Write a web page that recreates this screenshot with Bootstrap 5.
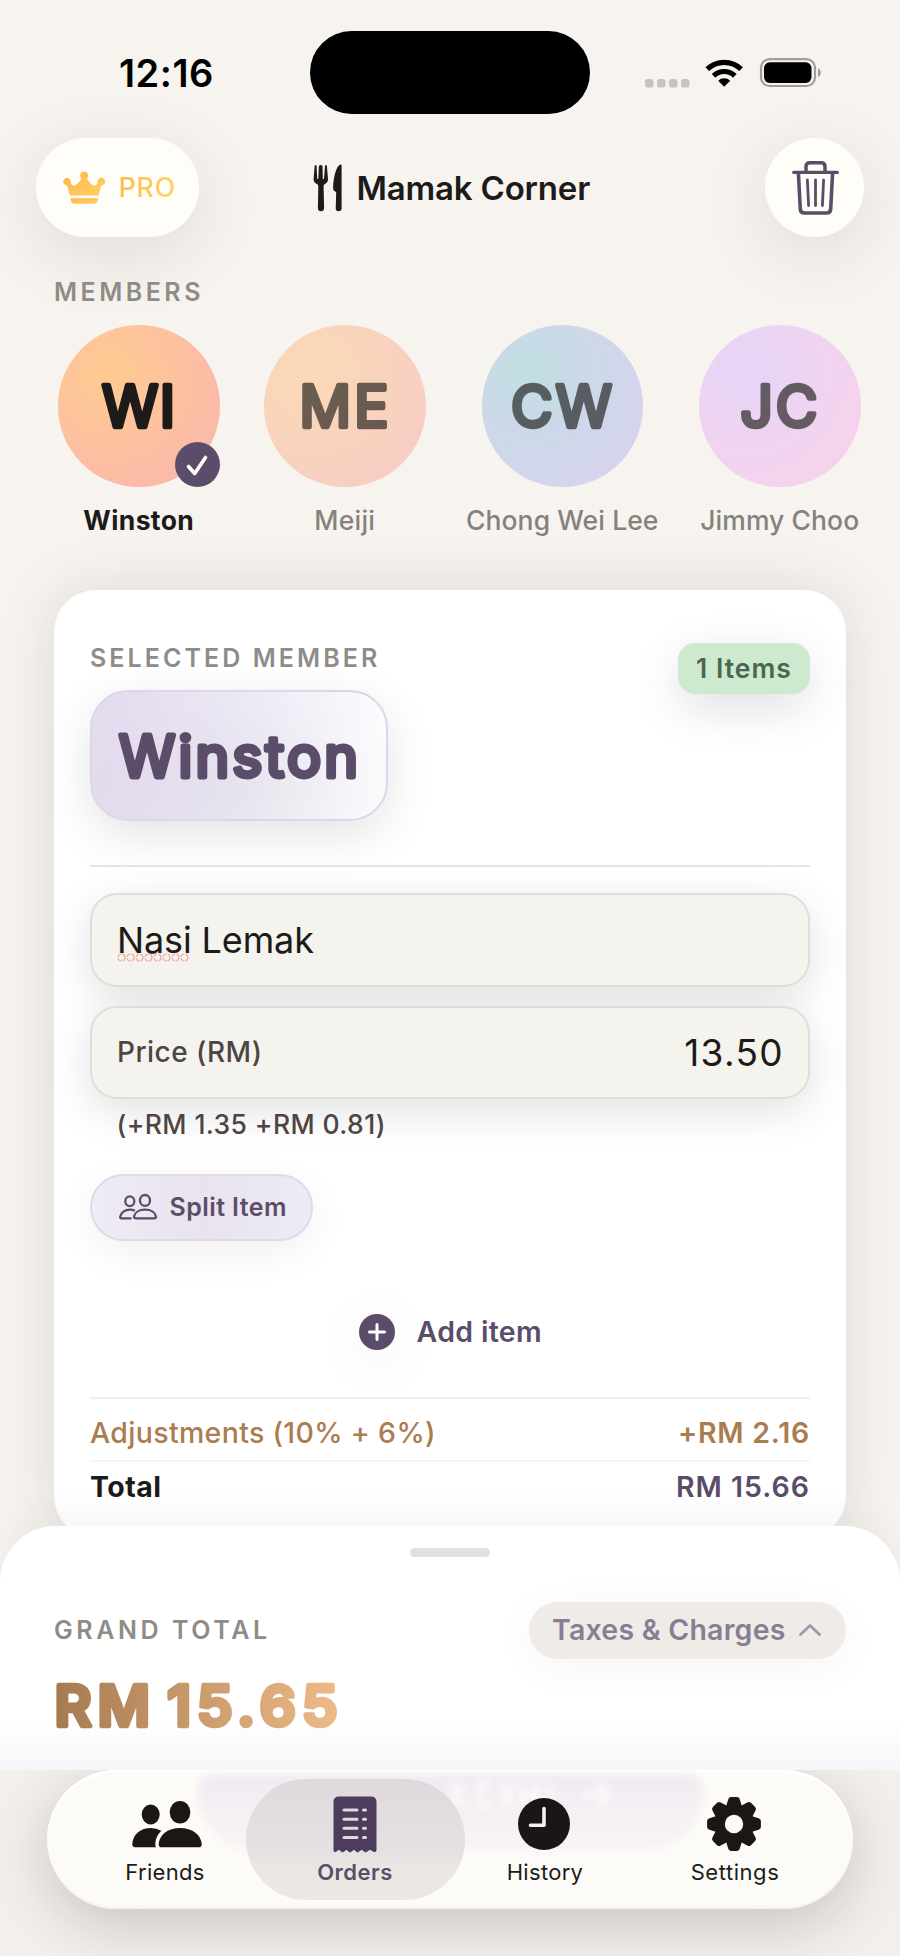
<!DOCTYPE html>
<html lang="en">
<head>
<meta charset="utf-8">
<meta name="viewport" content="width=device-width, initial-scale=1">
<title>Mamak Corner</title>
<link href="https://cdn.jsdelivr.net/npm/bootstrap@5.3.0/dist/css/bootstrap.min.css" rel="stylesheet">
<style>
  :root { --ink:#1c1b19; --plum:#5b4d69; --bronze:#aa7c4f; --muted:#8f8b86; --paper:#f7f4ef; }
  html, body { width:900px; height:1956px; overflow:hidden; }
  body { font-family:Inter,"Liberation Sans",sans-serif; background:var(--paper); color:var(--ink); font-weight:500; }
  svg { display:block; flex:none; overflow:visible; }
  .tx { line-height:30px; white-space:nowrap; }

  .statusbar { height:138px; padding-top:31px; }
  .clock { font-size:38px; font-weight:600; letter-spacing:.52px; line-height:84px; color:#000; margin-left:119px; width:191px; }
  .island { width:280px; height:83px; border-radius:42px; background:#000; }
  .signals { margin-left:55px; height:84px; }

  .topbar { height:99px; padding:0 36px; }
  .float-btn { height:99px; border-radius:50px; background:#fffdf8; box-shadow:0 16px 70px rgba(40,35,50,.11); }
  .pro-btn { width:163px; padding-left:26.5px; gap:13px; }
  .pro-label { font-size:27px; letter-spacing:.55px; background:linear-gradient(100deg,#ffb950,#ffd466); -webkit-background-clip:text; color:transparent; }
  .bin-btn { width:99px; padding-left:1px; }
  .place { font-size:33px; font-weight:600; letter-spacing:-.18px; gap:13.5px; margin-left:114px; }

  .eyebrow { font-size:25px; font-weight:600; color:var(--muted); }
  .members { height:265px; margin-top:18px; }
  .member { width:161.5px; font-size:26.5px; }
  .member .tx { margin-top:17px; line-height:32px; color:#85827d; }
  .face { width:161.5px; height:161.5px; border-radius:50%; }
  .face text { font-size:57px; font-weight:400; fill:#1c1b19; stroke:#1c1b19; stroke-width:4.5px; stroke-linejoin:round; text-anchor:middle; }
  .dim .face svg { opacity:.65; }
  .warm { background:radial-gradient(circle at 30% 30%,#ffcb92,#fdc19f 45%,#fbb8ab 80%); }
  .dim .warm { background:radial-gradient(circle at 30% 30%,#fbd9b6,#f9d3bd 45%,#f8cdc4 80%); }
  .cool { background:radial-gradient(circle at 30% 30%,#bfe0e2,#cad9e7 30%,#d6d4ed 80%); }
  .lilac { background:radial-gradient(circle at 30% 30%,#e6d4f8,#eed4f1 40%,#f6d2ec 80%); }
  .tick { right:0; bottom:0; }

  .order { margin:0 54px; height:948px; padding:53px 36px 0; border-radius:42px; background:#fff; box-shadow:0 0 60px rgba(50,40,40,.13); }
  .picked { width:298px; height:131px; margin-top:17px; border-radius:38px; border:2px solid #dfd5ea; background:radial-gradient(ellipse 62% 80% at 50% 78%,rgba(120,120,120,.07),transparent),linear-gradient(100deg,#e5dcef 8%,#ebe6f4 40%,#fbfafd 92%); box-shadow:0 14px 48px rgba(0,0,0,.11); padding-left:26px; }
  .count { width:132px; height:51px; border-radius:17px; background:#cdeace; color:#4b6550; font-size:26.5px; font-weight:600; letter-spacing:1px; line-height:50px; box-shadow:0 14px 48px rgba(0,0,0,.13); }
  .rule { height:2px; background:#e6e6e6; }
  .field { height:93.5px; border-radius:27px; border:2px solid #e2ddd8; background:#f5f3ee; padding:0 25px; box-shadow:0 12px 44px rgba(0,0,0,.12); }
  .field-text { font-size:36px; font-weight:400; letter-spacing:-.12px; line-height:44px; padding-top:1px; }
  .squiggle { left:0; top:35.5px; }
  .soft { color:#4d4541; }
  .split { width:223px; height:67px; margin-top:35px; border-radius:34px; border:2px solid #e1d8ec; background:linear-gradient(90deg,#efecf5,#e8e3ef 50%,#eeebf4); padding:0 0 1px 27px; gap:12.5px; color:var(--plum); font-size:25px; font-weight:600; letter-spacing:.42px; box-shadow:0 12px 40px rgba(0,0,0,.06); }
  .adder { margin-top:72px; height:38px; gap:21px; padding-left:1.5px; color:var(--plum); font-size:28.5px; font-weight:600; letter-spacing:.34px; }
  .adder svg { filter:drop-shadow(0 10px 24px rgba(0,0,0,.06)); }
  .sum { font-size:28.5px; }
  .sum-adj { height:61px; padding-top:19.5px; color:var(--bronze); }
  .sum-total { padding-top:10px; font-weight:700; }

  .sheet { position:relative; height:244px; margin-top:-12px; border-radius:56px 56px 0 0; background:linear-gradient(#fff 80%,#f6f6f6); box-shadow:0 -6px 44px rgba(40,40,40,.055); padding:22px 54px 0; }
  .grip { width:80px; height:9px; border-radius:5px; background:#e3e0df; }
  .charges { width:317px; height:57.5px; border-radius:29px; background:#efece8; padding-left:23px; color:#897d93; font-size:28.5px; font-weight:600; letter-spacing:.22px; gap:13px; box-shadow:0 8px 44px rgba(0,0,0,.045); }

  .dock { position:relative; height:186px; background:#f3f0eb; overflow:hidden; }
  .tabs { position:relative; width:806px; height:139px; margin:0 auto; border-radius:70px; padding:0 23px; background:#fdfbf7; box-shadow:0 16px 60px rgba(0,0,0,.18), inset 0 3px 1px #fff, inset 0 -2px 2px #f5f1f8; }
  .ghost { position:absolute; left:150px; top:4px; width:507px; height:78px; border-radius:18px 18px 66px 66px; background:linear-gradient(#f1ebf1,#f8f5f6); filter:blur(3px); }
  .ghost svg { position:absolute; left:250px; top:6px; }
  .tabbtn { position:relative; width:190px; padding-top:26px; font-size:22px; font-weight:400; letter-spacing:.3px; }
  .tabbtn .icobox { height:56px; }
  .tabbtn .tx { margin-top:4.5px; }
  .tabbtn.on { color:var(--plum); font-weight:600; letter-spacing:.5px; }
  .tabbtn.on::before { content:""; position:absolute; inset:9px -14.5px 9px -14.5px; border-radius:61px; background:linear-gradient(#dfd9de,#e5e1e2 60%,#ebe8e4 80%); }
  .tabbtn > * { position:relative; }
</style>
</head>
<body>
<div class="statusbar d-flex">
  <div class="clock">12:16</div>
  <div class="island"></div>
  <div class="signals d-flex align-items-center">
    <svg width="178" height="84" viewBox="645 31 178 84">
      <g fill="#c7c3bf"><rect x="645" y="79" width="8.500" height="8.500" rx="2.800"/><rect x="657" y="79" width="8.500" height="8.500" rx="2.800"/><rect x="669" y="79" width="8.500" height="8.500" rx="2.800"/><rect x="681" y="79" width="8.500" height="8.500" rx="2.800"/></g>
      <path d="M724.200 86.800l-6-6a8.600 8.600 0 0 1 12 0z"/>
      <g fill="none" stroke="#000" stroke-width="5.200"><path d="M713.600 75.800a15.200 15.200 0 0 1 21.200 0"/><path d="M707.300 69.200a24.300 24.300 0 0 1 33.800 0"/></g>
      <rect x="761" y="59.200" width="54" height="26.800" rx="8.500" fill="none" stroke="#a09e9a" stroke-width="2.200"/>
      <rect x="764" y="62.300" width="47.500" height="20.600" rx="5.800"/>
      <path d="M818 68.300c3.800 1.200 3.800 7.600 0 8.800z" fill="#a09e9a"/>
    </svg>
  </div>
</div>

<header class="topbar d-flex align-items-center">
  <div class="float-btn pro-btn d-flex align-items-center">
    <svg width="43" height="34" viewBox="0 0 43 34" fill="url(#gold)">
      <defs><linearGradient id="gold" x1="0" y1="0" x2="1" y2="1"><stop offset="0" stop-color="#ffb44c"/><stop offset="1" stop-color="#ffd064"/></linearGradient></defs>
      <path d="M7 24.500L4.200 14.400A3.800 3.800 0 1 1 7.700 11.500C8.800 16.200 13.200 15.700 18.500 7.700A4.100 4.100 0 1 1 23.900 7.700C29.200 15.700 33.600 16.200 34.700 11.500A3.800 3.800 0 1 1 38.200 14.400L35.700 24.500z"/>
      <path d="M7.300 27.200H35.300L34.300 30.500Q33.500 32.800 31.300 32.800H11.300Q9 32.800 8.300 30.500z"/>
    </svg>
    <span class="pro-label tx">PRO</span>
  </div>
  <div class="place d-flex align-items-center">
    <svg width="30" height="48" viewBox="0 0 30 48" fill="#1c1b19">
      <path d="M1.600 2Q2.700.2 3.600 2L4.200 14.500Q4.900 16 5.300 14.500L5.900 2Q7.700-.2 9.500 2L9.800 14.500Q10.300 16 11 14.500L12 2Q13 .2 13.900 2L15 15Q15.200 18.500 11.500 20.200Q10.500 20.800 10.600 22.500L11.100 44Q11 47.200 8 47.200Q5 47.200 4.900 44L5.300 22.500Q5.300 20.800 4.200 20.200Q.5 18.500.6 15z"/>
      <path d="M28.600 1.500V44Q28.600 47.200 25.700 47.200Q22.700 47.200 22.700 44L23.200 28.500Q22.900 27.600 21.500 27Q20 26.300 20.100 24C20.500 12 23.500 2 27.200.500Q28.600.2 28.600 1.500z"/>
    </svg>
    <span class="tx">Mamak Corner</span>
  </div>
  <div class="float-btn bin-btn ms-auto d-flex align-items-center justify-content-center">
    <svg width="47" height="54" viewBox="0 0 47 54" fill="none" stroke="#5b4d69" stroke-linecap="round" stroke-linejoin="round">
      <path stroke-width="3.300" d="M1.800 11.400H45.200"/>
      <path stroke-width="3.500" d="M14 10.500V5.500Q14 1.700 17.800 1.700H29.200Q33 1.700 33 5.500V10.500"/>
      <path stroke-width="3.600" d="M6.400 12L8.300 48Q8.600 52 12.400 52H34.600Q38.400 52 38.700 48L40.600 12"/>
      <path stroke-width="2.800" d="M15.400 19L16.600 44.500M23.500 19V44.500M31.600 19L30.400 44.500"/>
    </svg>
  </div>
</header>

<div class="eyebrow tx" style="margin:40px 0 0 54px;letter-spacing:3.500px">MEMBERS</div>

<section class="members d-flex">
  <div class="member d-flex flex-column align-items-center" style="margin-left:58px">
    <div class="face warm position-relative">
      <svg width="161" height="161" viewBox="0 0 161 161"><text x="80.500" y="101.500" textLength="73">WI</text></svg>
      <svg class="tick position-absolute" width="45" height="45" viewBox="0 0 45 45"><circle cx="22.500" cy="22.500" r="22.500" fill="#5b4d69"/><path d="M13.500 24.500L19.700 31.500L30.500 15.500" fill="none" stroke="#fff" stroke-width="3.600" stroke-linecap="round" stroke-linejoin="round"/></svg>
    </div>
    <div class="tx" style="font-weight:700;letter-spacing:.380px;color:#1c1b19">Winston</div>
  </div>
  <div class="member dim d-flex flex-column align-items-center" style="margin-left:44.500px">
    <div class="face warm">
      <svg width="161" height="161" viewBox="0 0 161 161"><text x="80" y="101.500" textLength="89">ME</text></svg>
    </div>
    <div class="tx" style="letter-spacing:.200px">Meiji</div>
  </div>
  <div class="member dim d-flex flex-column align-items-center" style="margin-left:56px">
    <div class="face cool">
      <svg width="161" height="161" viewBox="0 0 161 161"><text x="79.500" y="101.500" textLength="101">CW</text></svg>
    </div>
    <div class="tx" style="letter-spacing:.080px">Chong Wei Lee</div>
  </div>
  <div class="member dim d-flex flex-column align-items-center" style="margin-left:56px">
    <div class="face lilac">
      <svg width="161" height="161" viewBox="0 0 161 161"><text x="80" y="101.500" textLength="77">JC</text></svg>
    </div>
    <div class="tx" style="letter-spacing:.080px">Jimmy Choo</div>
  </div>
</section>

<main class="order">
  <div class="d-flex justify-content-between align-items-start">
    <div>
      <div class="eyebrow tx" style="letter-spacing:3.070px">SELECTED MEMBER</div>
      <div class="picked">
        <svg width="240" height="127" viewBox="0 0 240 127"><text x="1" y="85" textLength="239" font-size="57" font-weight="400" fill="#5b4d69" stroke="#5b4d69" stroke-width="4.800" stroke-linejoin="round">Winston</text></svg>
      </div>
    </div>
    <div class="count text-center">1 Items</div>
  </div>
  <div class="rule" style="margin-top:43.500px"></div>
  <div class="field d-flex align-items-center" style="margin-top:26.500px">
    <div class="field-text position-relative">Nasi Lemak
      <svg class="squiggle position-absolute" width="72" height="9" viewBox="0 0 72 9" fill="none" stroke="#f3a9a4" stroke-width="1.200" stroke-dasharray="4.500 1.200"><circle cx="4.500" cy="4.500" r="3.500"/><circle cx="13.500" cy="4.500" r="3.500"/><circle cx="22.500" cy="4.500" r="3.500"/><circle cx="31.500" cy="4.500" r="3.500"/><circle cx="40.500" cy="4.500" r="3.500"/><circle cx="49.500" cy="4.500" r="3.500"/><circle cx="58.500" cy="4.500" r="3.500"/><circle cx="67.500" cy="4.500" r="3.500"/></svg>
    </div>
  </div>
  <div class="field d-flex align-items-center justify-content-between" style="margin-top:19px">
    <span class="soft" style="font-size:28px;letter-spacing:.450px">Price (RM)</span>
    <span class="field-text" style="font-size:37px;letter-spacing:1.350px;margin-right:-1px">13.50</span>
  </div>
  <div class="soft tx" style="margin:10px 0 0 26.500px;font-size:26.500px;letter-spacing:.400px">(+RM 1.35 +RM 0.81)</div>
  <div class="split d-flex align-items-center">
    <svg width="38" height="26" viewBox="0 0 38 26" fill="none" stroke="#5b4d69" stroke-width="2.300" stroke-linejoin="round">
      <ellipse cx="10.800" cy="7.300" rx="4.500" ry="4.900"/><ellipse cx="26" cy="6.400" rx="5" ry="5.400"/>
      <path d="M12.500 24.300H2.300Q1 24.300 1.200 22.800C1.900 18.600 6 15.700 10.800 15.700Q13.700 15.700 15.900 16.800"/>
      <path d="M17 24.300Q14.800 24.300 15 22.600C15.700 18.500 20 15.700 26 15.700S36.300 18.500 37 22.600Q37.200 24.300 35 24.300z"/>
    </svg>
    <span class="tx">Split Item</span>
  </div>
  <div class="adder d-flex align-items-center justify-content-center">
    <svg width="36" height="36" viewBox="0 0 36 36"><circle cx="18" cy="18" r="18" fill="#5b4d69"/><path d="M18 10.500V25.500M10.500 18H25.500" stroke="#fff" stroke-width="3" stroke-linecap="round"/></svg>
    <span class="tx">Add item</span>
  </div>
  <div class="rule" style="margin-top:45.500px;background:#f0f0f0"></div>
  <div class="sum sum-adj d-flex justify-content-between">
    <span class="tx" style="letter-spacing:.330px">Adjustments (10% + 6%)</span>
    <span class="tx" style="font-weight:600;letter-spacing:.770px">+RM 2.16</span>
  </div>
  <div class="rule" style="background:#f5f5f5"></div>
  <div class="sum sum-total d-flex justify-content-between">
    <span class="tx" style="letter-spacing:.450px">Total</span>
    <span class="tx" style="font-weight:600;letter-spacing:1px;color:#5b4d69">RM 15.66</span>
  </div>
</main>

<section class="sheet">
  <div class="grip mx-auto"></div>
  <div class="d-flex justify-content-between align-items-center" style="margin-top:44.500px">
    <span class="eyebrow tx" style="letter-spacing:3.580px">GRAND TOTAL</span>
    <div class="charges d-flex align-items-center">
      <span class="tx">Taxes &amp; Charges</span>
      <svg width="22" height="12" viewBox="0 0 22 12" fill="none" stroke="#a197a8" stroke-width="2.800" stroke-linecap="round" stroke-linejoin="round"><path d="M1.500 10.500L11 1.500L20.500 10.500"/></svg>
    </div>
  </div>
  <svg width="300" height="90" viewBox="54 1659 300 90">
    <defs><linearGradient id="bronze" gradientUnits="userSpaceOnUse" x1="57" y1="0" x2="337" y2="0"><stop offset="0" stop-color="#a77b51"/><stop offset="1" stop-color="#edba88"/></linearGradient></defs>
    <text x="54.500" y="1726" textLength="283" word-spacing="-9" font-size="57" font-weight="600" fill="url(#bronze)" stroke="url(#bronze)" stroke-width="4.500" stroke-linejoin="round">RM 15.65</text>
  </svg>
</section>

<footer class="dock">
  <nav class="tabs d-flex">
    <div class="ghost"><svg width="180" height="30" viewBox="0 0 180 30" fill="none" stroke="#fbf8fb" stroke-width="5"><path d="M4 4L16 26M16 4L4 26M44 4H34V26H44M54 4L66 26M66 4L54 26M76 26V4M90 26V4M76 15H90M102 4V26M136 15H162M152 4Q166 15 152 26"/></svg></div>
    <div class="tabbtn d-flex flex-column align-items-center">
      <div class="icobox d-flex align-items-center" style="padding-left:3px">
        <svg width="70" height="47" viewBox="0 0 70 47" fill="#1b1813">
          <ellipse cx="18.700" cy="13.500" rx="9" ry="10"/><ellipse cx="48" cy="11.300" rx="10.300" ry="11.300"/>
          <path d="M3 46.300Q.2 46 .3 43C.9 33 9 27 18.700 27Q24.500 27 29.300 29.700Q23.500 35.500 23.300 42.500Q23.200 44.500 23.900 46.300z"/>
          <path d="M29 46.300Q26.600 46 26.700 42.800C27.500 33.500 36 27 48 27S68.900 33.500 69.700 42.800Q69.800 46 67.400 46.300z"/>
        </svg>
      </div>
      <span class="tx">Friends</span>
    </div>
    <div class="tabbtn on d-flex flex-column align-items-center">
      <div class="icobox d-flex align-items-center">
        <svg width="44" height="57" viewBox="0 0 44 57">
          <path fill="#4d3c5b" d="M.5 6Q.5.500 6 .500H38Q43.500.500 43.500 6V54.500Q42.500 57 40 55.500L37 53.700L33.500 56Q32.500 56.600 31.500 56L28.800 53.700L25.500 56Q24.500 56.600 23.500 56L21 53.700L18 56Q17 56.600 16 56L13.500 53.700L10.500 56Q9.500 56.600 8.500 56L6 53.700L3.500 55.500Q1 57 .5 54.500z"/>
          <path stroke="#dfdade" stroke-width="3" stroke-linecap="round" d="M11 14H24M30.500 14H32.500M11 23.300H24M30.500 23.300H32.500M11 32.300H24M30.500 32.300H32.500M11 41.500H24M30.500 41.500H32.500"/>
        </svg>
      </div>
      <span class="tx">Orders</span>
    </div>
    <div class="tabbtn d-flex flex-column align-items-center">
      <div class="icobox d-flex align-items-center">
        <svg width="52" height="52" viewBox="0 0 52 52" style="margin-left:-3px"><circle cx="26" cy="26" r="26" fill="#1b151a"/><path d="M26 10.500V27.300H12.500" fill="none" stroke="#f5f0f4" stroke-width="3.600" stroke-linecap="round" stroke-linejoin="round"/></svg>
      </div>
      <span class="tx">History</span>
    </div>
    <div class="tabbtn d-flex flex-column align-items-center">
      <div class="icobox d-flex align-items-center">
        <svg width="54" height="54" viewBox="-27 -27 54 54" style="margin-left:-2px">
          <g fill="#1b1813"><circle r="19.800"/>
            <path id="tooth" d="M-8-17.500L-5.800-24.500Q-5.200-26.900-3-26.900H3Q5.200-26.900 5.800-24.500L8-17.500z"/>
            <use href="#tooth" transform="rotate(45)"/><use href="#tooth" transform="rotate(90)"/><use href="#tooth" transform="rotate(135)"/><use href="#tooth" transform="rotate(180)"/><use href="#tooth" transform="rotate(225)"/><use href="#tooth" transform="rotate(270)"/><use href="#tooth" transform="rotate(315)"/>
          </g>
          <circle r="9.200" fill="#fdfbf7"/>
        </svg>
      </div>
      <span class="tx" style="letter-spacing:.550px">Settings</span>
    </div>
  </nav>
</footer>
<script src="https://cdn.jsdelivr.net/npm/bootstrap@5.3.0/dist/js/bootstrap.bundle.min.js"></script>
</body>
</html>
